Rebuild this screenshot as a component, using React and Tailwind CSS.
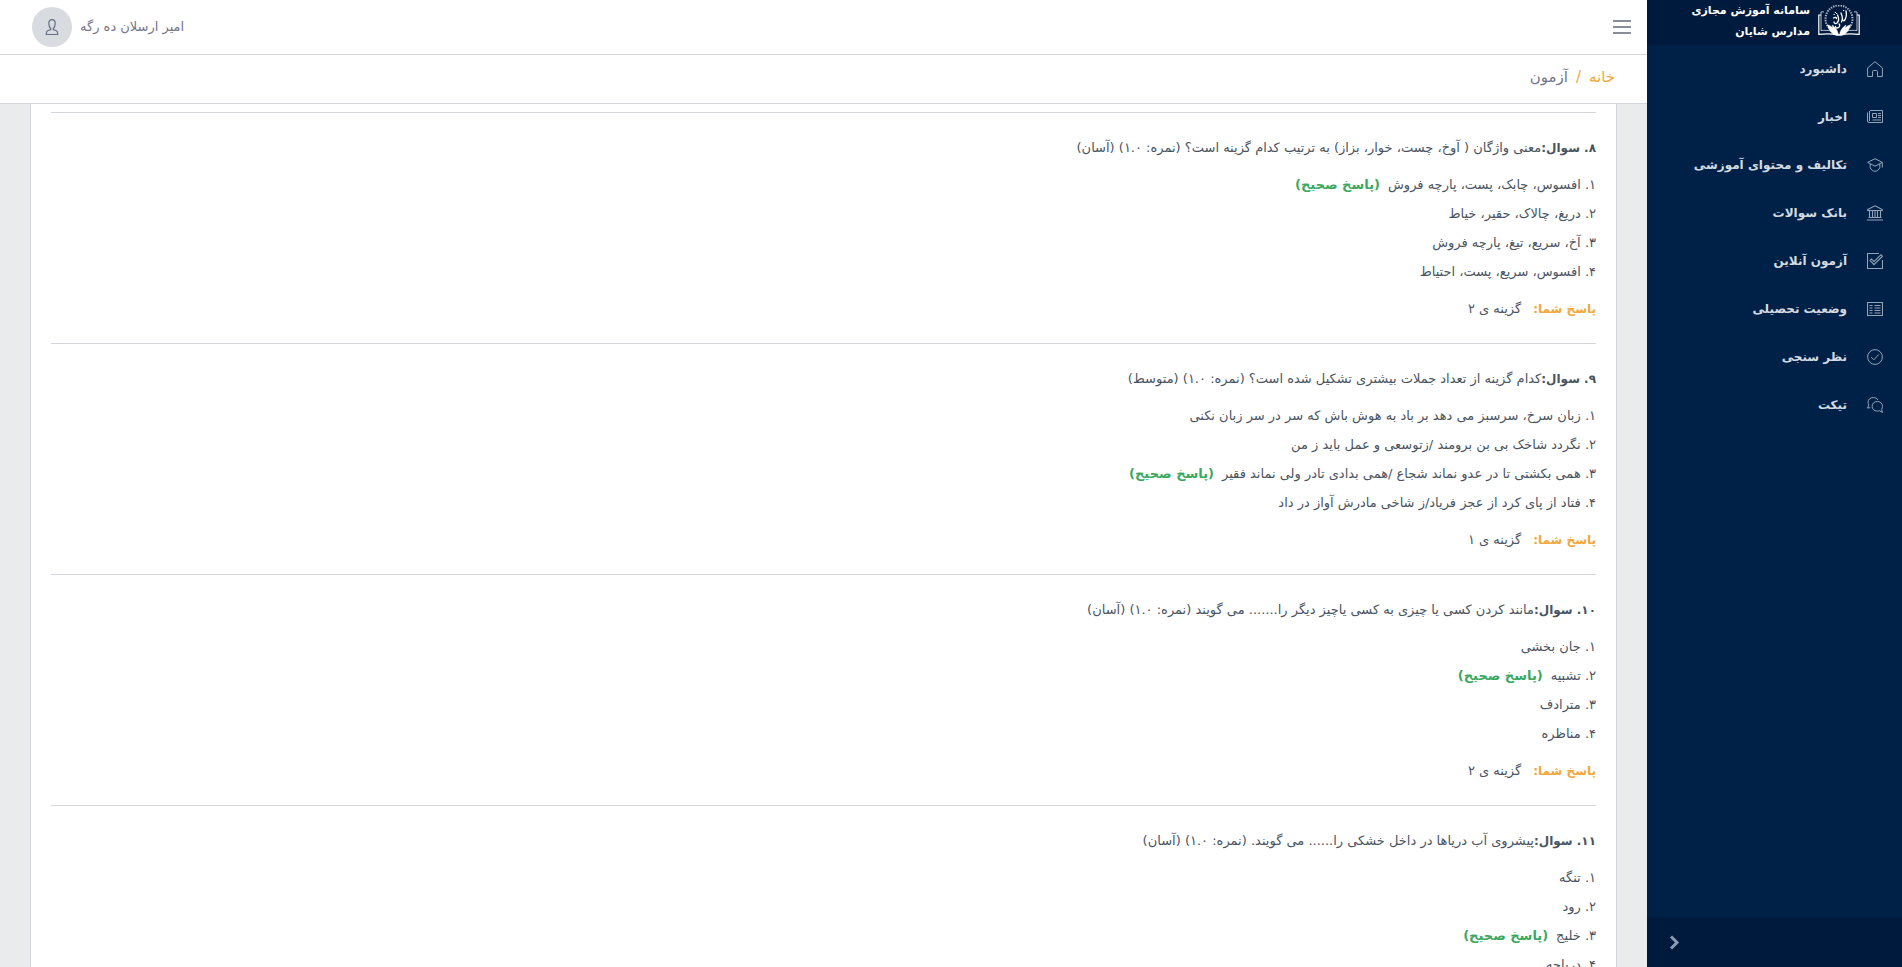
const FA = (n) => String(n).replace(/\d/g, (d) => "۰۱۲۳۴۵۶۷۸۹"[d]);

const Icon = ({ children, className = "size-4" }) => (
  <svg viewBox="0 0 16 16" className={`shrink-0 ${className}`} fill="none" stroke="currentColor" strokeWidth="1" aria-hidden="true">
    {children}
  </svg>
);

const icons = {
  home: <path d="M.6 6.900 8 .7l7.400 6.200V15.500H10.500V10.500a1 1 0 0 0-1-1h-3a1 1 0 0 0-1 1v5H.6z" />,
  news: <path d="M3 1.500H15.500V13.500H2A1.500 1.500 0 0 1 .5 12V3.500M2.500 2v10M5.500 4.500h4v4h-4zM11 4.500h3M11 6.500h3M11 8.500h3M5.500 11h8.500" />,
  cap: <path d="M8 1.700.7 5.400 8 9.200l7.300-3.800zM3.200 7v3.500C4 12.800 6 14.300 8 14.300s4-1.500 4.800-3.800V7M15.300 5.400V10.500" />,
  bank: <path d="M.7 4.500 8 .8l7.300 3.700v1H.7zM2.500 5.500v7M5.500 5.500v7M8 5.500v7M10.500 5.500v7M13.500 5.500v7M1.500 12.500h13M0 15h16" strokeWidth="1.100" />,
  task: <path d="M15.500 7v8.500H.5V.5H12M4.500 6 3 7.500l4 4.200 8.500-8.500L14 1.700l-7 7z" strokeWidth="1.100" />,
  list: <path d="M.5 1.500h15v13H.5zM2.500 4.500h3M2.500 7h3M2.500 9.500h3M2.500 12h3M7.500 4.500h6M7.500 7h6M7.500 9.500h6M7.500 12h6" strokeWidth="1.100" />,
  check: <><circle cx="8" cy="8" r="7.400" /><path d="m4.300 8.200 2.600 2.600 4.800-5.300" /></>,
  chat: <path d="M11 3C10 1.400 8.300.5 6.300.5 3.300.5 1 2.600 1 5.300c0 1.200.4 2 .9 2.700L.5 11l2.800-.3M10.300 4.500c-3 0-5.200 2.100-5.200 4.800s2.200 4.800 5.200 4.800c.8 0 1.500-.1 2.200-.4l3 1.800-.9-3.200c.6-.9.900-1.900.9-3 0-2.700-2.200-4.800-5.200-4.800z" />,
};

const menu = [
  ["home", "داشبورد"],
  ["news", "اخبار"],
  ["cap", "تکالیف و محتوای آموزشی"],
  ["bank", "بانک سوالات"],
  ["task", "آزمون آنلاین"],
  ["list", "وضعیت تحصیلی"],
  ["check", "نظر سنجی"],
  ["chat", "تیکت"],
];

const questions = [
  {
    n: 8,
    text: "معنی واژگان ( آوخ، چست، خوار، بزاز) به ترتیب کدام گزینه است؟",
    level: "آسان",
    options: ["افسوس، چابک، پست، پارچه فروش", "دریغ، چالاک، حقیر، خیاط", "آخ، سریع، تیغ، پارچه فروش", "افسوس، سریع، پست، احتیاط"],
    correct: 1,
    answer: 2,
  },
  {
    n: 9,
    text: "کدام گزینه از تعداد جملات بیشتری تشکیل شده است؟",
    level: "متوسط",
    options: [
      "زبان سرخ، سرسبز می دهد بر باد به هوش باش که سر در سر زبان نکنی",
      "نگردد شاخک بی بن برومند /زتوسعی و عمل باید ز من",
      "همی بکشتی تا در عدو نماند شجاع /همی بدادی تادر ولی نماند فقیر",
      "فتاد از پای کرد از عجز فریاد/ز شاخی مادرش آواز در داد",
    ],
    correct: 3,
    answer: 1,
  },
  {
    n: 10,
    text: "مانند کردن کسی یا چیزی به کسی یاچیز دیگر را....... می گویند",
    level: "آسان",
    options: ["جان بخشی", "تشبیه", "مترادف", "مناظره"],
    correct: 2,
    answer: 2,
  },
  {
    n: 11,
    text: "پیشروی آب دریاها در داخل خشکی را...... می گویند.",
    level: "آسان",
    options: ["تنگه", "رود", "خلیج", "دریاچه"],
    correct: 3,
    answer: 3,
  },
];

function Logo() {
  return (
    <svg viewBox="0 0 42 32" className="h-8 w-[42px] shrink-0" fill="none" stroke="#fff" aria-hidden="true">
      <path d="M11 23A13.500 13.500 0 1 1 31 23" strokeWidth="2" strokeDasharray="1.400 1.100" strokeOpacity=".7" />
      <path d="M6 7c-1.500-.3-2.500-.3-3 0v18.500c7-.5 13 0 18 4.500 5-4.500 11-5 18-4.500V7c-.5-.3-1.500-.3-3 0" strokeWidth=".9" strokeOpacity=".8" />
      <path d="M3 10H.8v19.300c8-.8 14-.8 18.200.7h4c4.200-1.500 10.200-1.500 18.200-.7V10H39" strokeWidth="1.200" />
      <path d="M9.500 20c2 .2 4 1.500 5.500 3l-1-3c3 2 6 5 6.500 10.500-5 0-9.500-4-11-10.500zM32.500 20c-2 .2-4 1.500-5.500 3l1-3c-3 2-6 5-6.500 10.500 5 0 9.500-4 11-10.500z" fill="#fff" strokeWidth=".4" />
      <path d="M28 6c.8 4 .3 7-1.500 9.500-1 .8-2-.2-2-1.500M23 8c1.500 3.500 1.800 6.500.5 9M19.500 10c1.500 3 1.500 6-.5 8-1.500 1-3 .5-3-1M15.500 13c1.500-1 3-.6 3 .6M21 19c1 1 1 2.500-.5 3.500s-3 .3-3-1" strokeWidth="1.300" strokeLinecap="round" />
      <path d="M15.500 9.500h1.200M18 8.500h1.200M16.800 7.500h1.200M25 5.500h1.200" strokeWidth="1.200" />
    </svg>
  );
}

function Question({ q }) {
  return (
    <section className="border-t border-[#d3d6da] py-5">
      <h2 className="mb-2">
        <strong className="text-xs">{FA(q.n)}. سوال:</strong>
        {q.text} (نمره: ۱.۰) ({q.level})
      </h2>
      <ol className="mb-2">
        {q.options.map((o, i) => (
          <li key={o}>
            {FA(i + 1)}. {o}
            {q.correct === i + 1 && <strong className="ms-2 text-[#3aa860]">(پاسخ صحیح)</strong>}
          </li>
        ))}
      </ol>
      <p>
        <strong className="me-3 text-xs text-[#f3a73b]">پاسخ شما:</strong>گزینه ی {FA(q.answer)}
      </p>
    </section>
  );
}

export default function App() {
  return (
    <div dir="rtl" lang="fa" className="flex h-screen overflow-hidden bg-[#e9ebed] font-['DejaVu_Sans',sans-serif] text-[13px] text-[#4a5461]">
      <aside className="flex w-[255px] shrink-0 flex-col bg-[#002147]">
        <a href="#home" className="flex h-[45px] items-center gap-2 bg-[#001a3d] ps-[42px] pb-1 text-[11px] leading-[21px] font-bold text-white">
          <Logo />
          <span>سامانه آموزش مجازی<br />مدارس شایان</span>
        </a>
        <nav className="flex-1">
          {menu.map(([icon, label]) => (
            <a key={icon} href={`#${icon}`} className="flex h-12 items-center gap-5 ps-[19px] text-xs font-bold text-[#d5dae1]">
              <Icon className="size-4 text-[#94a3b8]">{icons[icon]}</Icon>
              {label}
            </a>
          ))}
        </nav>
        <button type="button" aria-label="جمع کردن منو" className="flex h-[50px] items-center justify-end bg-[#001a3d] pe-5 text-[#8c9bb2]">
          <Icon className="size-4"><path d="m4 2.500 6 6-6 6" strokeWidth="3" /></Icon>
        </button>
      </aside>
      <div className="flex min-w-0 flex-1 flex-col">
        <header className="flex h-[55px] shrink-0 items-center justify-between border-b border-[#d3d6da] bg-white ps-4 pe-8">
          <button type="button" aria-label="منو" className="flex flex-col gap-1 text-[#8a8d99]">
            <span className="h-0.5 w-[18px] bg-current" />
            <span className="h-0.5 w-[18px] bg-current" />
            <span className="h-0.5 w-[18px] bg-current" />
          </button>
          <a href="#profile" className="flex items-center gap-2 text-[#73768a]">
            امیر ارسلان ده رگه
            <span className="flex size-10 items-center justify-center rounded-full bg-[#d8dbe0] text-[#636f83]">
              <Icon><path d="M8 .7C6 .7 4.800 2.200 4.800 4.300c0 2.200.7 4.200 1.900 5.200v1l-3.200 1.200c-.8.400-1.200 1.500-1.200 3.800h11.400c0-2.300-.4-3.400-1.200-3.800l-3.200-1.200v-1c1.200-1 1.900-3 1.900-5.200C11.200 2.200 10 .7 8 .7z" strokeWidth="1.200" /></Icon>
            </span>
          </a>
        </header>
        <nav className="flex h-[49px] shrink-0 items-center gap-2 border-b border-[#d3d6da] bg-white ps-8 pb-1 text-[15px]">
          <a href="#home" className="text-[#f3a73b]">خانه</a>
          <span className="text-[#f3a73b]">/</span>
          <span className="text-[#73768a]">آزمون</span>
        </nav>
        <main className="min-h-0 flex-1 overflow-y-auto px-[30px] [scrollbar-width:none]">
          <div className="border-x border-[#d3d6da] bg-white px-5 pt-2 leading-[29px]">
            {questions.map((q) => <Question key={q.n} q={q} />)}
          </div>
        </main>
      </div>
    </div>
  );
}
